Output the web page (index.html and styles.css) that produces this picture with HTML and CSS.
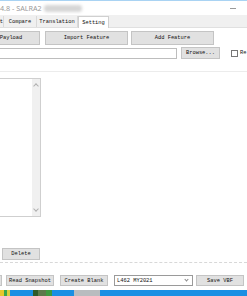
FILE: index.html
```html
<!DOCTYPE html>
<html>
<head>
<meta charset="utf-8">
<link rel="stylesheet" href="styles.css">
</head>
<body>
<div class="window">
  <div class="titlebar">
    <span class="title">4.8 - SALRA2</span>
    <span class="blur"></span>
    <span class="minimize"></span>
  </div>
  <div class="tabs">
    <div class="tab tab-cut">t</div>
    <div class="tab tab-compare">Compare</div>
    <div class="tab tab-translation">Translation</div>
    <div class="tab tab-setting active">Setting</div>
  </div>
  <div class="panel">
    <div class="row row1">
      <div class="btn btn-payload">Payload</div>
      <div class="btn btn-import">Import Feature</div>
      <div class="btn btn-add">Add Feature</div>
    </div>
    <div class="row row2">
      <div class="input"></div>
      <div class="btn btn-browse">Browse...</div>
      <div class="check"></div>
      <span class="check-label">Re</span>
    </div>
    <div class="sep"></div>
    <div class="listbox">
      <div class="scrollbar">
        <span class="arrow up"></span>
        <span class="arrow down"></span>
      </div>
    </div>
    <div class="btn btn-delete">Delete</div>
    <div class="dashed"></div>
    <div class="row row3">
      <div class="btn btn-cut"></div>
      <div class="btn btn-read">Read Snapshot</div>
      <div class="btn btn-create">Create Blank</div>
      <div class="combo"><span>L462 MY2021</span><span class="caret"></span></div>
      <div class="btn btn-save">Save VBF</div>
    </div>
  </div>
  <div class="taskbar">
    <span class="tk tk-y1"></span>
    <span class="tk tk-g1"></span>
    <span class="tk tk-y2"></span>
    <span class="tk tk-b1"></span>
    <span class="tk tk-dg"></span>
    <span class="tk tk-gm"></span>
    <span class="tk tk-g2"></span>
    <span class="tk tk-b2"></span>
    <span class="tk tk-gray"></span>
    <span class="tk tk-b3"></span>
  </div>
</div>
</body>
</html>
```
FILE: styles.css
```css
html, body {
  margin: 0;
  padding: 0;
}
body {
  width: 247px;
  height: 296px;
  overflow: hidden;
  background: #ffffff;
  font-family: "Liberation Mono", "DejaVu Sans Mono", monospace;
  font-size: 5.4px;
  color: #111;
}
.window {
  display: flex;
  flex-direction: column;
  height: 296px;
}
.titlebar {
  height: 14px;
  border-top: 1px solid #a9d3f3;
  display: flex;
  align-items: center;
  position: relative;
  background: #fff;
}
.title {
  font-family: "Noto Sans", sans-serif;
  font-size: 7.2px;
  color: #9a9a9a;
  margin-left: 0;
  white-space: nowrap;
}
.blur {
  width: 38px;
  height: 7px;
  background: #d6d6d6;
  border-radius: 3px;
  filter: blur(1.5px);
  margin-left: 2px;
}
.minimize {
  position: absolute;
  right: 11px;
  top: 7px;
  width: 6px;
  height: 1px;
  background: #9a9a9a;
}
.tabs {
  height: 13px;
  background: #f0f0f0;
  display: flex;
  align-items: flex-end;
  box-sizing: border-box;
  border-bottom: 1px solid #e0e0e0;
}
.tab {
  height: 11px;
  display: flex;
  align-items: center;
  justify-content: center;
  box-sizing: border-box;
  border-right: 1px solid #d9d9d9;
  white-space: nowrap;
  overflow: hidden;
}
.tab-cut { width: 4px; justify-content: flex-end; }
.tab-compare { width: 33px; }
.tab-translation { width: 41px; }
.tab-setting {
  width: 31px;
  height: 12px;
  background: #fff;
  border: 1px solid #d0d0d0;
  border-bottom: none;
  margin-bottom: -1px;
}
.panel {
  display: flex;
  flex-direction: column;
  padding-top: 3px;
}
.row {
  display: flex;
  align-items: center;
}
.btn {
  box-sizing: border-box;
  background: #e1e1e1;
  border: 1px solid #c4c4c4;
  display: flex;
  align-items: center;
  justify-content: center;
  white-space: nowrap;
}
.row1 { height: 14px; }
.row1 .btn { height: 14px; }
.btn-payload { width: 58px; margin-left: -18px; }
.btn-import { width: 83px; margin-left: 5px; }
.btn-add { width: 83px; margin-left: 3px; }
.row2 { height: 12px; margin-top: 2px; }
.input {
  width: 179px;
  height: 11px;
  margin-left: -2px;
  box-sizing: border-box;
  border: 1px solid #bdbdbd;
  background: #fff;
}
.btn-browse { width: 39px; height: 12px; margin-left: 4px; }
.check {
  width: 7px;
  height: 7px;
  box-sizing: border-box;
  border: 1px solid #777;
  background: #fff;
  margin-left: 11px;
}
.check-label { margin-left: 2px; white-space: nowrap; }
.sep {
  height: 1px;
  background: #ececec;
  margin-top: 12px;
}
.listbox {
  width: 44px;
  margin-left: -3px;
  height: 139px;
  margin-top: 6px;
  box-sizing: border-box;
  border: 1px solid #cfcfcf;
  display: flex;
  justify-content: flex-end;
  background: #fff;
}
.scrollbar {
  width: 8px;
  background: #f0f0f0;
  display: flex;
  flex-direction: column;
  justify-content: space-between;
  align-items: center;
  padding: 4px 0;
}
.arrow {
  width: 3px;
  height: 3px;
  border-left: 1px solid #b0b0b0;
  border-top: 1px solid #b0b0b0;
}
.arrow.up { transform: rotate(45deg); margin-top: 1px; }
.arrow.down { transform: rotate(225deg); margin-bottom: 1px; }
.btn-delete {
  width: 38px;
  height: 12px;
  margin-left: 2px;
  margin-top: 31px;
}
.dashed {
  height: 0;
  border-top: 1px dashed #d8d8d8;
  margin-top: 2px;
}
.row3 { height: 11px; margin-top: 12px; }
.row3 .btn { height: 11px; }
.btn-cut { width: 6px; margin-left: -4px; }
.btn-read { width: 48px; margin-left: 4px; }
.btn-create { width: 48px; margin-left: 6px; }
.combo {
  width: 79px;
  height: 11px;
  margin-left: 6px;
  box-sizing: border-box;
  border: 1px solid #9a9a9a;
  background: #fff;
  display: flex;
  align-items: center;
  justify-content: space-between;
  padding-left: 2px;
  padding-right: 4px;
  white-space: nowrap;
}
.caret {
  width: 2px;
  height: 2px;
  border-right: 1px solid #888;
  border-bottom: 1px solid #888;
  transform: rotate(45deg);
  margin-bottom: 2px;
}
.btn-save { width: 48px; margin-left: 3px; }
.taskbar {
  margin-top: auto;
  height: 6px;
  display: flex;
  background: #1a8fe3;
}
.tk { height: 6px; display: block; }
.tk-y1 { width: 4px; background: #e8c72a; }
.tk-g1 { width: 3px; background: #3aa64a; }
.tk-y2 { width: 3px; background: #d8cf3a; }
.tk-b1 { width: 23px; background: #1a8fe3; }
.tk-dg { width: 5px; background: #2f5a2a; }
.tk-gm { width: 8px; background: #5c7a4a; }
.tk-g2 { width: 6px; background: #3f9a3f; }
.tk-b2 { width: 22px; background: #1a8fe3; }
.tk-gray { width: 26px; background: #b9bcbf; }
.tk-b3 { flex: 1; background: #1a8fe3; }
```
